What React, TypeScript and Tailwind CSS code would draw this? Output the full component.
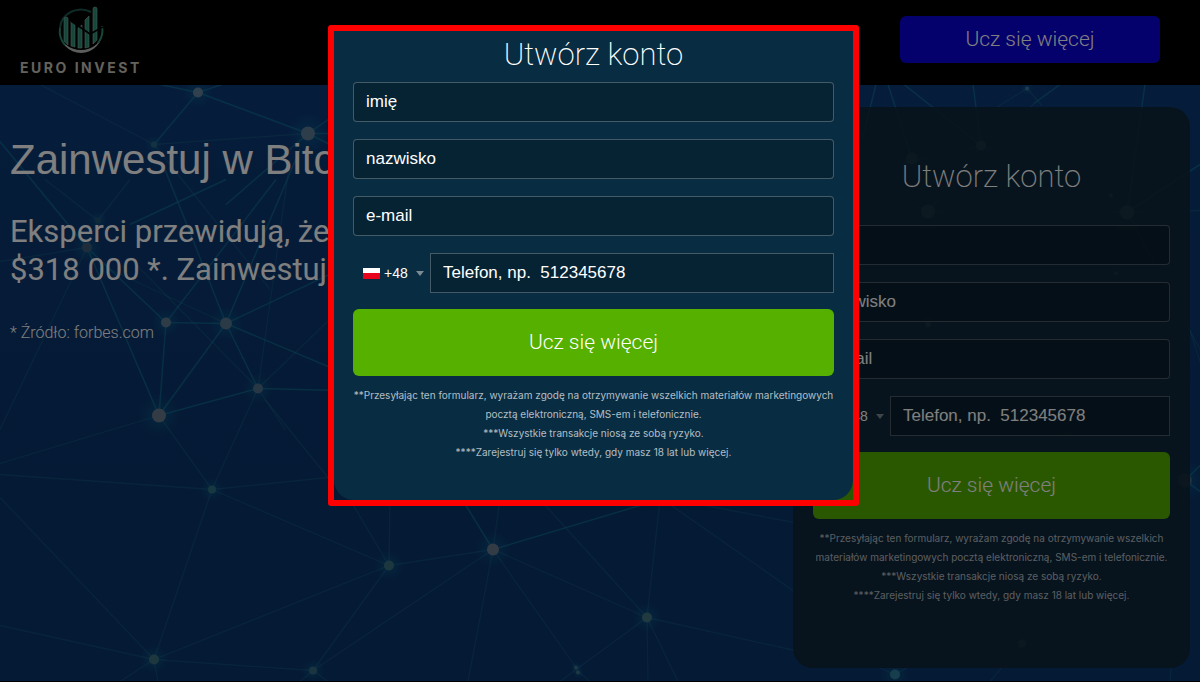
import { useState } from 'react'

type Point = [number, number]

const NODES: [number, number, number, string][] = [
  [198, 93, 5, '#63809a'],
  [154, 145, 3, '#2b6482'],
  [308, 134, 7, '#5c7a94'],
  [98, 221, 3, '#1f5270'],
  [87, 248, 5, '#3c5a78'],
  [166, 323, 5, '#5d7890'],
  [226, 324, 6, '#54748c'],
  [258, 389, 5, '#4e7088'],
  [159, 416, 7, '#66768a'],
  [212, 490, 4, '#2f7080'],
  [389, 566, 5, '#39707c'],
  [154, 660, 5, '#39707c'],
  [313, 671, 4, '#356880'],
  [493, 550, 6, '#66768a'],
  [647, 618, 5, '#42747e'],
  [576, 668, 2, '#3f6f84'],
  [578, 673, 2, '#3f6f84'],
  [895, 675, 5, '#2f7c98'],
  [1185, 481, 7, '#3f6080'],
  [1027, 89, 2, '#42749a'],
  [981, 146, 5, '#5c8098'],
  [912, 159, 6, '#42708a'],
  [928, 212, 7, '#5c8098'],
  [1127, 213, 7, '#5c8098'],
  [1111, 196, 2, '#5c8098'],
  [1116, 274, 2, '#5c8098'],
  [928, 325, 3, '#5c8098'],
  [1022, 644, 4, '#42708a'],
]

const BRIGHT_LINES: [Point, Point][] = [
  [[160, 85], [198, 93]],
  [[198, 93], [222, 85]],
  [[198, 93], [308, 134]],
  [[198, 93], [154, 145]],
  [[308, 134], [340, 112]],
  [[308, 134], [340, 134]],
  [[308, 134], [226, 205]],
  [[226, 180], [130, 225]],
  [[308, 134], [340, 150]],
  [[0, 142], [87, 248]],
  [[87, 248], [166, 323]],
  [[87, 248], [159, 416]],
  [[166, 323], [226, 324]],
  [[166, 323], [159, 416]],
  [[166, 323], [276, 180]],
  [[226, 324], [159, 416]],
  [[226, 324], [258, 389]],
  [[226, 324], [340, 270]],
  [[226, 324], [340, 372]],
  [[226, 324], [300, 150]],
  [[159, 416], [258, 389]],
  [[258, 389], [340, 391]],
  [[226, 324], [165, 170]],
  [[493, 550], [660, 500]],
  [[493, 550], [450, 480]],
  [[1185, 481], [1200, 466]],
  [[1185, 481], [1200, 492]],
  [[1034, 104], [1060, 85]],
  [[876, 85], [862, 140]],
  [[888, 85], [912, 159]],
  [[904, 85], [981, 146]],
  [[973, 85], [981, 146]],
  [[1145, 85], [1127, 213]],
  [[1127, 213], [1200, 165]],
]

const FAINT_LINES: [Point, Point][] = [
  [[40, 85], [154, 145]],
  [[154, 145], [308, 134]],
  [[154, 145], [270, 290]],
  [[45, 180], [98, 221]],
  [[130, 180], [98, 221]],
  [[98, 221], [87, 248]],
  [[87, 248], [0, 430]],
  [[87, 248], [0, 262]],
  [[110, 270], [226, 324]],
  [[135, 264], [258, 389]],
  [[258, 389], [290, 160]],
  [[258, 389], [340, 310]],
  [[258, 389], [285, 430]],
  [[159, 416], [0, 464]],
  [[159, 416], [212, 490]],
  [[258, 389], [212, 490]],
  [[212, 490], [0, 475]],
  [[212, 490], [328, 478]],
  [[265, 400], [328, 478]],
  [[212, 490], [389, 566]],
  [[212, 490], [154, 660]],
  [[0, 498], [154, 660]],
  [[0, 626], [154, 660]],
  [[154, 660], [389, 566]],
  [[154, 660], [313, 671]],
  [[154, 660], [120, 682]],
  [[154, 660], [158, 682]],
  [[389, 566], [313, 671]],
  [[313, 671], [493, 550]],
  [[313, 671], [300, 682]],
  [[313, 671], [328, 682]],
  [[389, 566], [350, 500]],
  [[389, 566], [390, 500]],
  [[389, 566], [493, 550]],
  [[493, 550], [500, 500]],
  [[493, 550], [468, 682]],
  [[493, 550], [576, 668]],
  [[493, 550], [647, 618]],
  [[540, 500], [647, 618]],
  [[660, 500], [647, 618]],
  [[647, 618], [576, 670]],
  [[576, 670], [560, 682]],
  [[576, 670], [590, 682]],
  [[647, 618], [648, 682]],
  [[647, 618], [678, 682]],
  [[647, 618], [795, 651]],
  [[670, 505], [810, 603]],
  [[700, 505], [810, 526]],
  [[1027, 89], [990, 112]],
  [[1027, 89], [1042, 106]],
  [[981, 146], [928, 212]],
  [[981, 146], [840, 178]],
  [[981, 146], [1127, 213]],
  [[928, 212], [1127, 213]],
  [[860, 180], [928, 212]],
  [[1127, 213], [1200, 211]],
  [[1127, 213], [1200, 350]],
  [[1034, 104], [928, 212]],
  [[895, 675], [860, 660]],
  [[895, 675], [930, 655]],
  [[1185, 481], [1060, 430]],
  [[1185, 481], [1170, 682]],
  [[1180, 300], [1200, 362]],
  [[1022, 644], [990, 682]],
]

function NetworkBackground() {
  return (
    <svg
      className="absolute inset-0 h-full w-full"
      viewBox="0 85 1200 597"
      preserveAspectRatio="xMidYMid slice"
      aria-hidden="true"
    >
      <defs>
        <radialGradient id="glow">
          <stop offset="0" stopColor="#0d86a8" stopOpacity="0.3" />
          <stop offset="1" stopColor="#0d86a8" stopOpacity="0" />
        </radialGradient>
      </defs>
      {FAINT_LINES.map(([a, b], i) => (
        <line key={i} x1={a[0]} y1={a[1]} x2={b[0]} y2={b[1]} stroke="#1f7090" strokeOpacity="0.35" strokeWidth="1.3" />
      ))}
      {BRIGHT_LINES.map(([a, b], i) => (
        <line key={i} x1={a[0]} y1={a[1]} x2={b[0]} y2={b[1]} stroke="#12789a" strokeOpacity="0.6" strokeWidth="1.5" />
      ))}
      {NODES.map(([x, y, r, fill], i) => (
        <g key={i}>
          <circle cx={x} cy={y} r={r * 3} fill="url(#glow)" />
          <circle cx={x} cy={y} r={r} fill={fill} />
        </g>
      ))}
    </svg>
  )
}

function Logo() {
  return (
    <a href="#" className="flex flex-col items-center">
      <svg width="48" height="53" viewBox="0 0 48 53" aria-hidden="true">
        <path d="M3 22A21 20 0 0 1 34 6" fill="none" stroke="#1d5a52" strokeWidth="2" />
        <path d="M2 24A22 23 0 1 0 46 24A22 20 0 0 1 2 24Z" fill="#b9bdb8" />
        <path d="M3 22A21 21 0 0 0 8 39M45 20A21 21 0 0 1 41 37" fill="none" stroke="#2c8a72" strokeWidth="2" />
        <g fill="#2a8f75" stroke="#8fb5a8" strokeWidth="0.6">
          <path d="M7 35V13a2 2 0 0 1 4 0V39Z" />
          <path d="M14 40V15l4 3V41Z" />
          <path d="M21 42V22l4-3V42Z" />
          <path d="M28 42V14l4-4V41Z" />
          <path d="M36 38V3a2 2 0 0 1 4 0V34Z" />
        </g>
        <path d="M14 15L33 28L46 21" fill="none" stroke="#000000" strokeWidth="1.6" />
      </svg>
      <span className="font-['Inter',sans-serif] text-sm leading-[18px] font-bold tracking-[0.18em] text-[#c8c4b8]">
        EURO INVEST
      </span>
    </a>
  )
}

function PolishFlag() {
  return (
    <svg className="shrink-0" width="17" height="11" viewBox="0 0 17 11" aria-hidden="true">
      <rect width="17" height="11" fill="#ffffff" />
      <rect y="5" width="17" height="6" fill="#e8041c" />
    </svg>
  )
}

interface TextFieldProps {
  name: string
  type?: string
  placeholder: string
}

function TextField({ name, type = 'text', placeholder }: TextFieldProps) {
  return (
    <input
      name={name}
      type={type}
      placeholder={placeholder}
      aria-label={placeholder}
      className="h-10 w-full rounded-[4px] border border-white/25 bg-black/20 px-3 text-[17px] text-white placeholder:text-white placeholder:opacity-100"
    />
  )
}

function RegisterForm() {
  const [country, setCountry] = useState('+48')

  return (
    <form onSubmit={(e) => e.preventDefault()}>
      <div className="flex flex-col gap-[17px]">
        <TextField name="firstName" placeholder="imię" />
        <TextField name="lastName" placeholder="nazwisko" />
        <TextField name="email" type="email" placeholder="e-mail" />
        <div className="flex">
          <div className="flex w-[77px] shrink-0 items-center gap-1 pl-2.5">
            <PolishFlag />
            <select
              value={country}
              onChange={(e) => setCountry(e.target.value)}
              aria-label="+48"
              className="w-7 appearance-none bg-transparent text-sm text-white"
            >
              <option value="+48">+48</option>
            </select>
            <svg className="shrink-0" width="8" height="5" viewBox="0 0 8 5" aria-hidden="true">
              <path d="M0 0h8L4 5z" fill="#7d8b93" />
            </svg>
          </div>
          <input
            name="phone"
            type="tel"
            placeholder="Telefon, np.  512345678"
            aria-label="Telefon"
            className="h-10 w-full min-w-0 border border-white/25 bg-black/20 px-3 text-[17px] text-white placeholder:text-white placeholder:opacity-100"
          />
        </div>
      </div>
      <button
        type="submit"
        className="mt-4 h-[67px] w-full rounded-md bg-[#55b000] font-['Roboto',sans-serif] text-[21px] font-light text-white"
      >
        Ucz się więcej
      </button>
      <p className="mt-2.5 text-center font-['Inter',sans-serif] text-[10px] leading-[19px] text-white/70">
        **Przesyłając ten formularz, wyrażam zgodę na otrzymywanie wszelkich materiałów marketingowych pocztą
        elektroniczną, SMS-em i telefonicznie.
        <br />
        ***Wszystkie transakcje niosą ze sobą ryzyko.
        <br />
        ****Zarejestruj się tylko wtedy, gdy masz 18 lat lub więcej.
      </p>
    </form>
  )
}

function FormTitle() {
  return (
    <h2 className="text-center font-['Roboto',sans-serif] text-[31px] leading-[48px] font-extralight text-white">
      Utwórz konto
    </h2>
  )
}

function RegisterModal() {
  return (
    <div className="fixed inset-0 flex items-start justify-center overflow-hidden bg-black/50 pt-[25px] pr-[13px]">
      <div role="dialog" aria-modal="true" className="w-full max-w-[531px] rounded-[3px] border-6 border-[#fe0000]">
        <div className="rounded-b-[20px] bg-[#082c42] px-[19px] pb-[38px]">
          <FormTitle />
          <div className="mt-[3px]">
            <RegisterForm />
          </div>
        </div>
      </div>
    </div>
  )
}

export default function App() {
  return (
    <div className="flex min-h-screen flex-col overflow-x-hidden bg-black font-['Liberation_Sans',Arial,sans-serif]">
      <header className="flex h-[85px] items-start justify-between bg-black pt-[6px] pr-10 pl-5">
        <Logo />
        <button
          type="button"
          className="mt-[10px] h-[47px] w-[260px] rounded-md bg-[#0800d8] font-['Roboto',sans-serif] text-[21px] font-light text-white"
        >
          Ucz się więcej
        </button>
      </header>

      <main className="relative grow border-b border-black bg-linear-to-b from-[#0b3a76] via-[#0a356c] to-[#0a346a]">
        <NetworkBackground />
        <div className="relative flex justify-between px-2.5 pt-[22px] pb-[13px]">
          <div className="pt-[28px] text-white">
            <h1 className="text-[42px] leading-[50px]">Zainwestuj w Bitcoin</h1>
            <p className="mt-7 font-['Roboto',sans-serif] text-[31px] leading-[38px]">
              Eksperci przewidują, że
              <br />
              $318 000 *. Zainwestuj
            </p>
            <p className="mt-8 font-['Roboto',sans-serif] text-base leading-6 font-light">* Źródło: forbes.com</p>
          </div>
          <div className="w-[397px] shrink-0 rounded-[20px] bg-[#0f2431]/85 px-5 pt-[46px] pb-[63px]">
            <FormTitle />
            <div className="mt-6">
              <RegisterForm />
            </div>
          </div>
        </div>
      </main>

      <RegisterModal />
    </div>
  )
}
